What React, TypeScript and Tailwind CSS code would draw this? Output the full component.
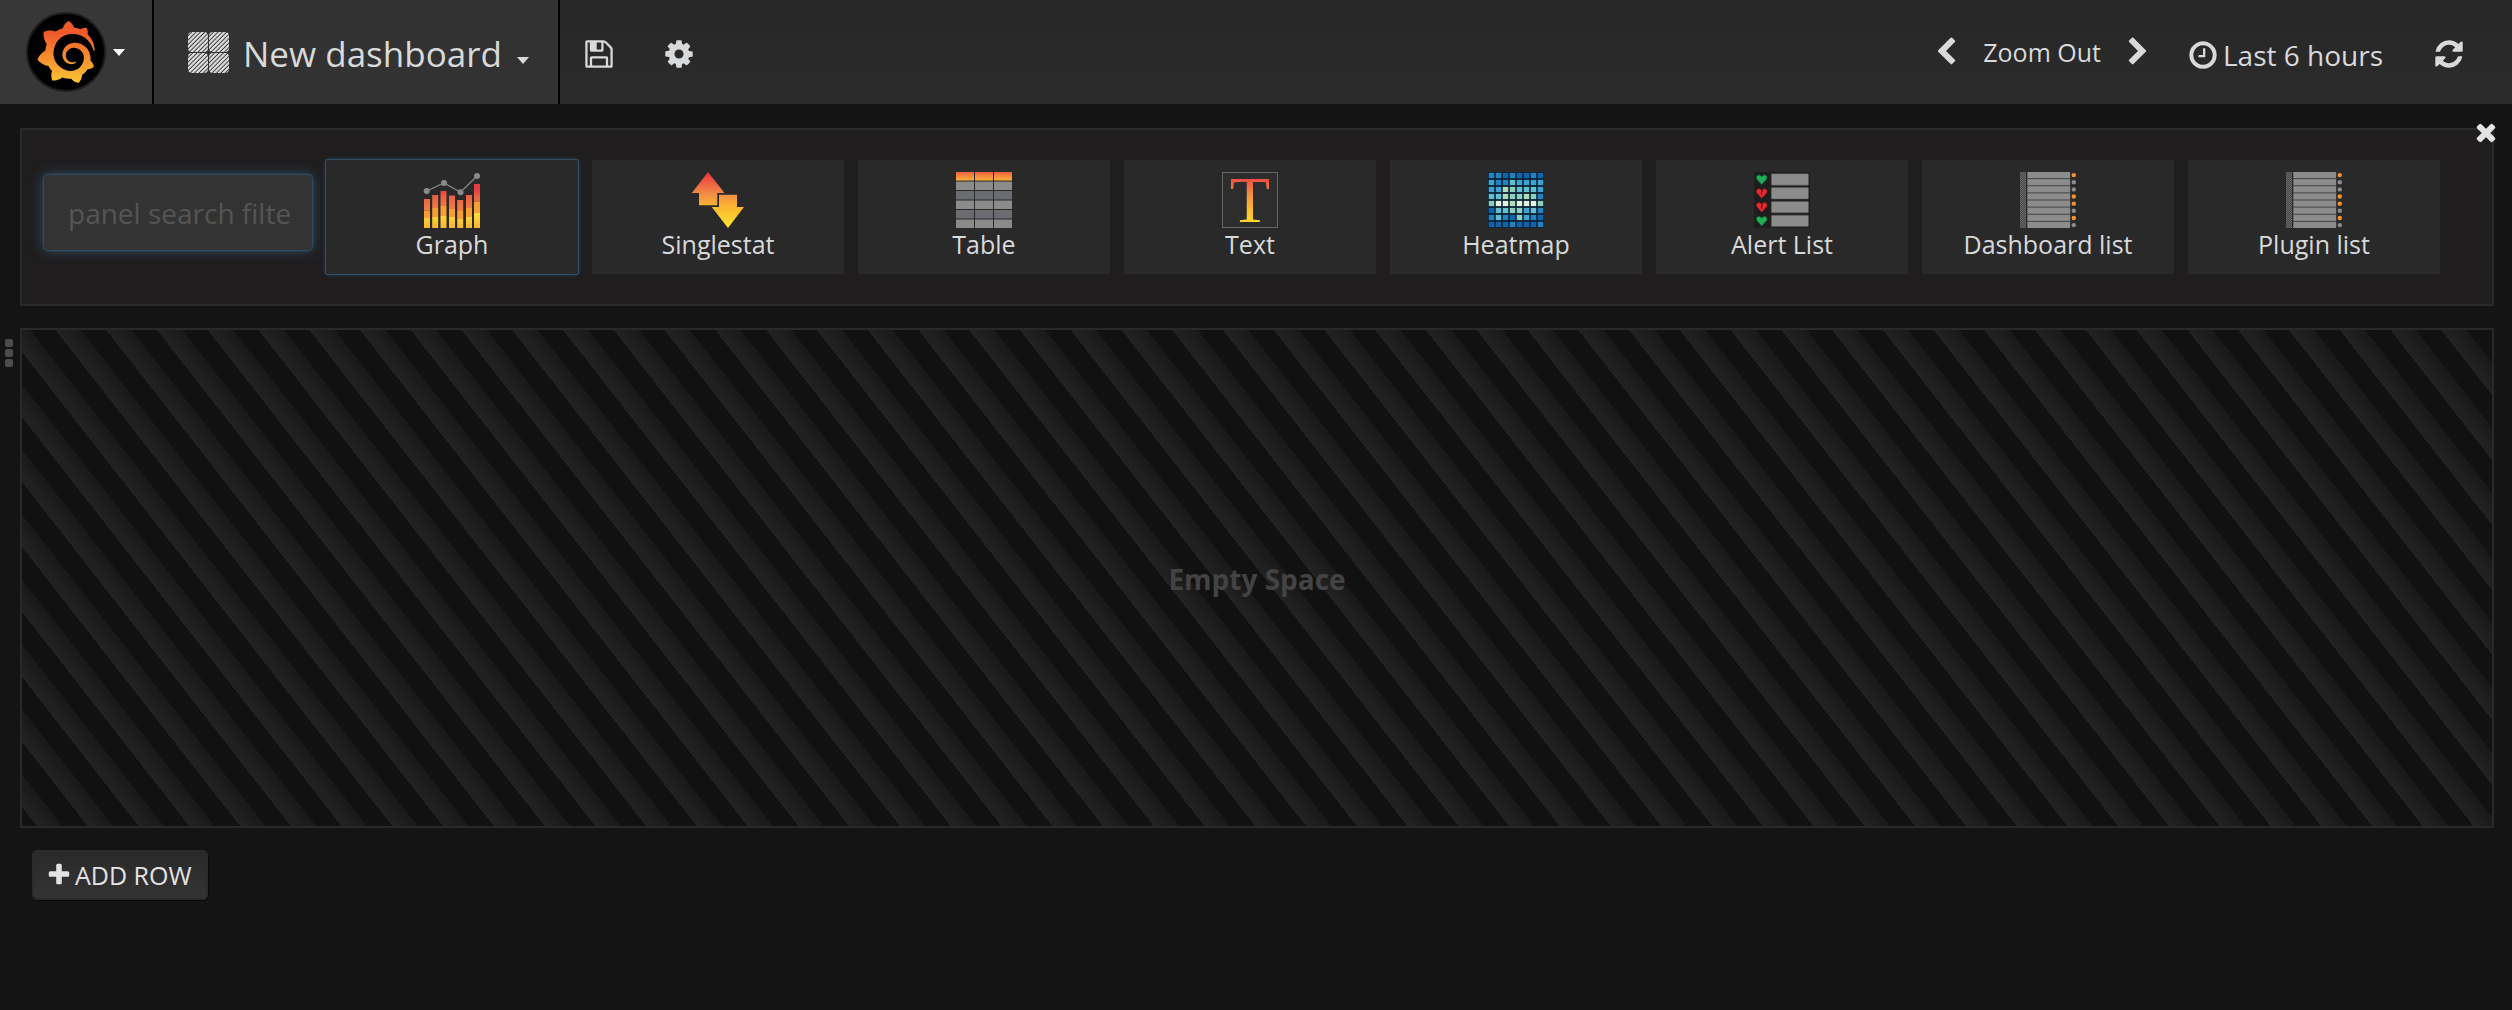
import React from "react";
import { SiGrafana } from "react-icons/si";

const ICONS = {
  save: "M512 1536h768v-384h-768v384zm896 0h128v-896q0-14-10-38.5t-20-34.5l-281-281q-10-10-34-20t-39-10v416q0 40-28 68t-68 28h-576q-40 0-68-28t-28-68v-416h-128v1280h128v-416q0-40 28-68t68-28h832q40 0 68 28t28 68v416zm-384-928v-320q0-13-9.5-22.5t-22.5-9.5h-192q-13 0-22.5 9.5t-9.5 22.5v320q0 13 9.5 22.5t22.5 9.5h192q13 0 22.5-9.5t9.5-22.5zm640 32v928q0 40-28 68t-68 28h-1344q-40 0-68-28t-28-68v-1344q0-40 28-68t68-28h928q40 0 88 20t76 48l280 280q28 28 48 76t20 88z",
  cog: "M1152 896q0-106-75-181t-181-75-181 75-75 181 75 181 181 75 181-75 75-181zm512-109v222q0 12-8 23t-20 13l-185 28q-19 54-39 91 35 50 107 138 10 12 10 25t-9 23q-27 37-99 108t-94 71q-12 0-26-9l-138-108q-44 23-91 38-16 136-29 186-7 28-36 28h-222q-14 0-24.5-8.5t-11.5-21.5l-28-184q-49-16-90-37l-141 107q-10 9-25 9-14 0-25-11-126-114-165-168-7-10-7-23 0-12 8-23 15-21 51-66.5t54-70.5q-27-50-41-99l-183-27q-13-2-21-12.5t-8-23.5v-222q0-12 8-23t19-13l186-28q14-46 39-92-40-57-107-138-10-12-10-24 0-10 9-23 26-36 98.5-107.5t94.5-71.5q13 0 26 10l138 107q44-23 91-38 16-136 29-186 7-28 36-28h222q14 0 24.5 8.5t11.5 21.5l28 184q49 16 90 37l142-107q9-9 24-9 13 0 25 10 129 119 165 170 7 8 7 22 0 12-8 23-15 21-51 66.5t-54 70.5q26 50 41 98l183 28q13 2 21 12.5t8 23.5z",
  clock: "M1024 544v448q0 14-9 23t-23 9h-320q-14 0-23-9t-9-23v-64q0-14 9-23t23-9h224v-352q0-14 9-23t23-9h64q14 0 23 9t9 23zm416 352q0-148-73-273t-198-198-273-73-273 73-198 198-73 273 73 273 198 198 273 73 273-73 198-198 73-273zm224 0q0 209-103 385.5t-279.5 279.5-385.5 103-385.5-103-279.5-279.5-103-385.5 103-385.5 279.5-279.5 385.5-103 385.5 103 279.5 279.5 103 385.5z",
  refresh: "M1639 1056q0 5-1 7-64 268-268 434.5t-478 166.5q-146 0-282.5-55t-243.5-157l-129 129q-19 19-45 19t-45-19-19-45v-448q0-26 19-45t45-19h448q26 0 45 19t19 45-19 45l-137 137q71 66 161 102t187 36q134 0 250-65t186-179q11-17 53-117 8-23 30-23h192q13 0 22.5 9.5t9.5 22.5zm25-800v448q0 26-19 45t-45 19h-448q-26 0-45-19t-19-45 19-45l138-138q-148-137-349-137-134 0-250 65t-186 179q-11 17-53 117-8 23-30 23h-199q-13 0-22.5-9.5t-9.5-22.5v-7q65-268 270-434.5t480-166.5q146 0 284 55.5t245 156.5l130-129q19-19 45-19t45 19 19 45z",
  left: "M1427 301l-531 531 531 531q19 19 19 45t-19 45l-166 166q-19 19-45 19t-45-19l-742-742q-19-19-19-45t19-45l742-742q19-19 45-19t45 19l166 166q19 19 19 45t-19 45z",
  right: "M1363 877l-742 742q-19 19-45 19t-45-19l-166-166q-19-19-19-45t19-45l531-531-531-531q-19-19-19-45t19-45l166-166q19-19 45-19t45 19l742 742q19 19 19 45t-19 45z",
  plus: "M1600 736v192q0 40-28 68t-68 28h-416v416q0 40-28 68t-68 28h-192q-40 0-68-28t-28-68v-416h-416q-40 0-68-28t-28-68v-192q0-40 28-68t68-28h416v-416q0-40 28-68t68-28h192q40 0 68 28t28 68v416h416q40 0 68 28t28 68z",
  times: "M1490 1322q0 40-28 68l-136 136q-28 28-68 28t-68-28l-294-294-294 294q-28 28-68 28t-68-28l-136-136q-28-28-28-68t28-68l294-294-294-294q-28-28-28-68t28-68l136-136q28-28 68-28t68 28l294 294 294-294q28-28 68-28t68 28l136 136q28 28 28 68t-28 68l-294 294 294 294q28 28 28 68z",
};

function Icon({ name, className }: { name: keyof typeof ICONS; className: string }) {
  return (
    <svg viewBox="0 0 1792 1792" className={`shrink-0 fill-current ${className}`} aria-hidden="true">
      <path d={ICONS[name]} />
    </svg>
  );
}

function Caret({ className }: { className: string }) {
  return (
    <svg viewBox="0 0 12 7" className={`h-[7px] w-3 shrink-0 fill-current ${className}`} aria-hidden="true">
      <path d="M0 0h12L6 7z" />
    </svg>
  );
}

function WarmGradient({ id }: { id: string }) {
  return (
    <linearGradient id={id} gradientUnits="userSpaceOnUse" x1="0" y1="0" x2="0" y2="56">
      <stop offset="0" stopColor="#e9323f" />
      <stop offset="0.38" stopColor="#f18b46" />
      <stop offset="0.65" stopColor="#fcba2e" />
      <stop offset="1" stopColor="#ffe534" />
    </linearGradient>
  );
}

function DashboardsIcon() {
  return (
    <svg viewBox="0 0 41 41" className="h-[41px] w-[41px] shrink-0" aria-hidden="true">
      <defs>
        <pattern id="hatch" width="3.1" height="3.1" patternUnits="userSpaceOnUse" patternTransform="rotate(-45)">
          <rect width="3.1" height="2.2" fill="#dcdcdc" />
        </pattern>
      </defs>
      {[[0, 0], [21, 0], [0, 21], [21, 21]].map(([x, y]) => (
        <rect key={`${x}-${y}`} x={x} y={y} width="20" height="20" rx="4" fill="url(#hatch)" />
      ))}
    </svg>
  );
}

const BARS = [
  [0, 27, 38.5, 46], [8.2, 23, 36, 45], [16.5, 19, 34, 44], [25, 23.5, 37, 45],
  [33.2, 28, 39, 47], [42, 23, 36, 45], [50, 12, 29.5, 41],
];
const POINTS = [[2.7, 19], [20, 11], [36.5, 20.3], [53, 4]];

function GraphIcon() {
  return (
    <>
      <defs>
        <linearGradient id="barTop" gradientUnits="userSpaceOnUse" x1="0" y1="12" x2="0" y2="40">
          <stop offset="0.2" stopColor="#e63c42" />
          <stop offset="0.45" stopColor="#ea6143" />
          <stop offset="1" stopColor="#f08142" />
        </linearGradient>
        <linearGradient id="barLow" gradientUnits="userSpaceOnUse" x1="0" y1="41" x2="0" y2="56">
          <stop offset="0" stopColor="#ffe035" />
          <stop offset="1" stopColor="#fbb431" />
        </linearGradient>
      </defs>
      {BARS.map(([x, a, b, c]) => (
        <g key={x}>
          <rect x={x} y={a} width="6" height={b - a} fill="url(#barTop)" />
          <rect x={x} y={b} width="6" height={c - b} fill="#f99e32" />
          <rect x={x} y={c} width="6" height={56 - c} fill="url(#barLow)" />
        </g>
      ))}
      <polyline points={POINTS.map((p) => p.join(",")).join(" ")} fill="none" stroke="#8a8a8a" strokeWidth="1.2" />
      {POINTS.map(([x, y]) => (
        <circle key={x} cx={x} cy={y} r="3" fill="#8a8a8a" />
      ))}
    </>
  );
}

function SinglestatIcon() {
  return (
    <>
      <defs><WarmGradient id="warmStat" /></defs>
      <g fill="url(#warmStat)">
        <path d="M18 0L34.5 21H27.3V33.3H9V21H1.8z" />
        <path d="M29 22.7H47V35H54L38 56L21.7 35H29z" />
      </g>
    </>
  );
}

function TableIcon() {
  return (
    <>
      <defs>
        <linearGradient id="head" x1="0" y1="0" x2="0" y2="1">
          <stop offset="0" stopColor="#ef6142" />
          <stop offset="1" stopColor="#fbb336" />
        </linearGradient>
      </defs>
      {[0, 1, 2, 3, 4, 5].map((r) =>
        [0, 1, 2].map((c) => (
          <rect
            key={`${r}-${c}`}
            x={c * 19}
            y={r * 9.5}
            width="18"
            height="8.5"
            fill={r === 0 ? "url(#head)" : r % 2 ? "#8b8b8b" : "#6b6c71"}
          />
        ))
      )}
    </>
  );
}

function TextIcon() {
  return (
    <>
      <defs><WarmGradient id="warmText" /></defs>
      <rect x="0.5" y="0.5" width="55" height="55" fill="#2d2d2d" stroke="#666" />
      <text x="28" y="50" textAnchor="middle" fontSize="66" fontFamily="Liberation Serif, serif" fill="url(#warmText)">
        T
      </text>
    </>
  );
}

const HEAT_COLORS: Record<string, string> = {
  a: "#0f64ae", b: "#2383c1", c: "#3fa3d0", d: "#62bfcf", e: "#8bd0bd", f: "#b1dcb8", g: "#e4f1dd",
};
const HEAT_ROWS = ["bbabaaba", "cbbdcccc", "ccfedddc", "ddfeefeb", "eggfggge", "addeecdb", "bdbaecba", "aaabaaab"];

function HeatmapIcon() {
  return (
    <>
      <rect width="56" height="56" fill="#0c2236" />
      {HEAT_ROWS.map((row, r) =>
        row.split("").map((k, c) => (
          <rect key={`${r}-${c}`} x={c * 7 + 0.8} y={r * 7 + 0.9} width="5.4" height="5.2" fill={HEAT_COLORS[k]} />
        ))
      )}
    </>
  );
}

function AlertListIcon() {
  return (
    <>
      <rect width="56" height="56" fill="#1d1d1d" />
      {[true, false, false, true].map((ok, i) => (
        <g key={i} transform={`translate(0 ${i * 13.8})`}>
          <rect x="17.3" y="1.8" width="37.2" height="11.4" rx="0.8" fill="#8c8c8c" stroke="#555" strokeWidth="0.6" />
          <path
            d="M7.7 12.6L2.9 7.3C1.6 5.6 2.6 3 4.8 3C6.2 3 7.2 3.8 7.7 4.8C8.2 3.8 9.2 3 10.6 3C12.8 3 13.8 5.6 12.5 7.3z"
            fill={ok ? "#1fae54" : "#ed2a2f"}
            stroke={ok ? "#155c31" : "#75201f"}
            strokeWidth="1"
          />
          {!ok && <path d="M7.7 3.4L8.3 5.6L7.4 7L7.8 9" fill="none" stroke="#4a1515" strokeWidth="1.1" />}
        </g>
      ))}
    </>
  );
}

function ListIcon({ id }: { id: string }) {
  return (
    <>
      <defs>
        <pattern id={id} width="2" height="2" patternUnits="userSpaceOnUse">
          <rect width="2" height="2" fill="#444" />
          <rect width="1" height="1" fill="#6c6c6c" />
          <rect x="1" y="1" width="1" height="1" fill="#6c6c6c" />
        </pattern>
      </defs>
      <rect width="6" height="56" fill={`url(#${id})`} />
      <rect x="7" width="43.5" height="56" fill="#4c4c4c" />
      {[1, 0, 0, 1, 1, 0, 1, 0].map((on, i) => (
        <g key={i}>
          <rect x="7.5" y={i * 7.14} width="42.5" height="6" fill="#8c8c8c" />
          <circle cx="53.8" cy={i * 7.14 + 3.1} r="2.2" fill={on ? "#f7922f" : "#8c8c8c"} />
        </g>
      ))}
    </>
  );
}

const PANELS = [
  { label: "Graph", icon: <GraphIcon />, selected: true },
  { label: "Singlestat", icon: <SinglestatIcon /> },
  { label: "Table", icon: <TableIcon /> },
  { label: "Text", icon: <TextIcon /> },
  { label: "Heatmap", icon: <HeatmapIcon /> },
  { label: "Alert List", icon: <AlertListIcon /> },
  { label: "Dashboard list", icon: <ListIcon id="checkA" /> },
  { label: "Plugin list", icon: <ListIcon id="checkB" /> },
];

function Navbar() {
  return (
    <header className="flex h-[104px] items-stretch bg-linear-to-b from-[#272727] to-[#2b2b2b]">
      <button aria-label="Main menu" className="flex items-center gap-[7px] border-r-2 border-black bg-[#373737] pr-[27px] pl-[26px] text-white">
        <span className="flex h-20 w-20 items-center justify-center rounded-full border-2 border-[#1c1c1c] bg-black">
          <svg className="absolute h-0 w-0" aria-hidden="true">
            <defs>
              <linearGradient id="logo" x1="0" y1="0" x2="0" y2="1">
                <stop offset="0.2" stopColor="#f05a2b" />
                <stop offset="1" stopColor="#fcc633" />
              </linearGradient>
            </defs>
          </svg>
          <SiGrafana size={62} fill="url(#logo)" />
        </span>
        <Caret className="" />
      </button>
      <button className="flex items-center border-r-2 border-black bg-[#323232] pr-[29px] pl-[34px]">
        <DashboardsIcon />
        <span className="mt-1 ml-[14px] text-[35px] leading-[48px]">New dashboard</span>
        <Caret className="mt-4 ml-[15px]" />
      </button>
      <nav className="flex grow items-center pl-[23px]">
        <button aria-label="Save dashboard"><Icon name="save" className="mt-1 h-8 w-8" /></button>
        <button aria-label="Settings" className="ml-12"><Icon name="cog" className="mt-1 h-8 w-8" /></button>
        <button aria-label="Back" className="ml-auto"><Icon name="left" className="h-[30px] w-[30px]" /></button>
        <button className="ml-[22px] text-[25px] leading-9">Zoom Out</button>
        <button aria-label="Forward" className="ml-[22px]"><Icon name="right" className="h-[30px] w-[30px]" /></button>
        <button className="mt-1.5 ml-[34px] flex items-center gap-1 text-[28px] leading-9">
          <Icon name="clock" className="h-8 w-8" />
          Last 6 hours
        </button>
        <button aria-label="Refresh" className="mr-[47px] ml-[50px]"><Icon name="refresh" className="mt-1 h-8 w-8" /></button>
      </nav>
    </header>
  );
}

export default function App() {
  return (
    <div className="min-h-screen bg-[#141414] font-['Open_Sans',sans-serif] text-[#d8d9da]">
      <Navbar />
      <main className="pt-6 pr-[18px]">
        <section className="relative ml-5 flex items-start gap-[14px] border-2 border-[#292929] bg-[#1f1d1e] py-[30px] pr-[52px] pl-[22px]">
          <input
            type="text"
            aria-label="Panel search filter"
            placeholder="panel search filter"
            className="mt-[15px] h-[75px] w-[268px] shrink-0 rounded bg-[#333333] pr-5 pl-6 text-[28px] shadow-[0_0_2px_1px_#32536a,0_0_14px_#32536a] outline-none placeholder:text-[#555555]"
          />
          {PANELS.map((p) => (
            <button
              key={p.label}
              className={`flex h-[114px] min-w-0 flex-1 flex-col items-center bg-[#292929] pt-3 text-white ${
                p.selected ? "rounded-xs shadow-[0_0_0_1px_#2f5067,0_0_5px_#2f5067]" : ""
              }`}
            >
              <svg viewBox="0 0 56 56" className="h-14 w-14 shrink-0 overflow-visible" aria-hidden="true">{p.icon}</svg>
              <span className="text-[25px] leading-8 text-[#d8d9da]">{p.label}</span>
            </button>
          ))}
          <button aria-label="Close" className="absolute -top-3 -right-2 text-[#e3e3e3]">
            <Icon name="times" className="h-7 w-7" />
          </button>
        </section>

        <section className="mt-[22px] flex">
          <button aria-label="Row menu" className="flex w-5 shrink-0 flex-col gap-[2px] self-start pt-[11px] pl-[5px]">
            <span className="h-2 w-2 rounded-xs bg-[#4c4c4c]" />
            <span className="h-2 w-2 rounded-xs bg-[#4c4c4c]" />
            <span className="h-2 w-2 rounded-xs bg-[#4c4c4c]" />
          </button>
          <div className="flex h-[500px] grow items-center justify-center border-2 border-[#292929] bg-[repeating-linear-gradient(-128deg,#111_0px,#111_20px,#191919_20px,#222_40px)] pt-0.5 text-[28px] leading-9 font-bold text-[#434343]">
            Empty Space
          </div>
        </section>

        <button className="mt-[22px] ml-8 flex h-[50px] items-center gap-[3px] rounded-md bg-linear-to-b from-[#292929] to-[#343434] pr-4 pl-[14px] text-[25px] leading-9 text-[#e3e3e3] shadow-[1px_1px_1px_#0a0a0a,inset_0_0_0_2px_#2b2b2b]">
          <Icon name="plus" className="h-[26px] w-[26px]" />
          ADD ROW
        </button>
      </main>
    </div>
  );
}
